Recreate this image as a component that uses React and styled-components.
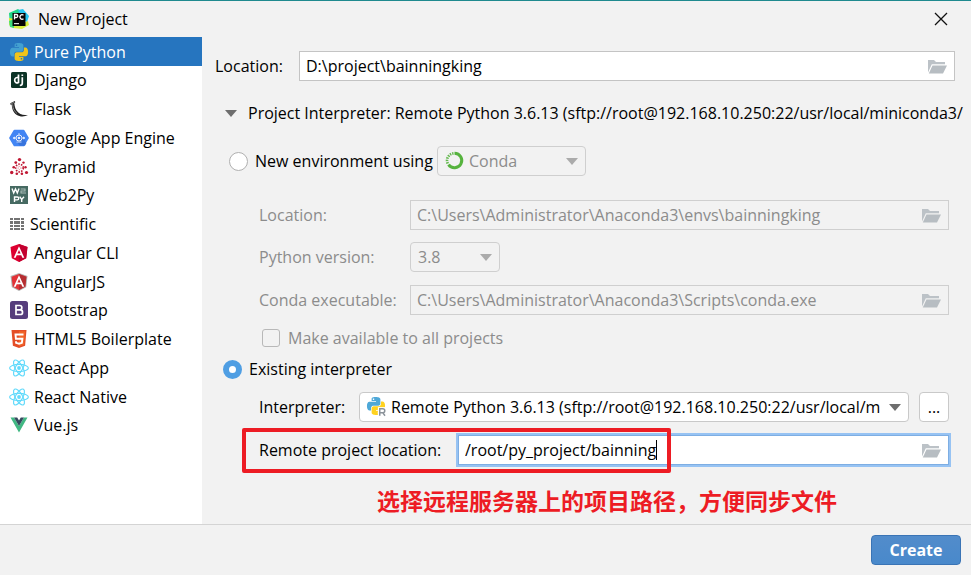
import React from 'react';
import styled, { createGlobalStyle, css } from 'styled-components';

const GlobalStyle = createGlobalStyle`
  *, *::before, *::after { box-sizing: border-box; }
  html, body { margin: 0; height: 100%; }
  #root { min-height: 100%; }
  body, button, input, select {
    font-family: "Open Sans", "Noto Sans", "Noto Sans CJK SC", sans-serif;
    font-size: 16px;
    line-height: 20px;
    color: #000;
  }
`;

const Dialog = styled.div`
  display: flex;
  flex-direction: column;
  min-height: 100vh;
  background: #f2f2f2;
  border-top: 1px solid #1f8a8f;
`;

const TitleBar = styled.header`
  display: flex;
  align-items: center;
  height: 36px;
  padding: 0 23px 0 9px;
  gap: 9px;
`;

const Title = styled.h1`
  flex: 1;
  margin: 0;
  font-size: 16px;
  font-weight: 400;
`;

const CloseButton = styled.button`
  display: flex;
  padding: 0;
  border: 0;
  background: none;
`;

const Body = styled.div`
  flex: 1;
  display: flex;
`;

const Sidebar = styled.nav`
  flex: none;
  width: 202px;
  background: #fff;
`;

const TypeList = styled.ul`
  display: grid;
  grid-auto-rows: 29px 28px 29px 29px;
  margin: 0;
  padding: 0;
  list-style: none;
`;

const TypeButton = styled.button`
  display: flex;
  align-items: center;
  gap: 6px;
  width: 100%;
  height: 100%;
  padding: 0 0 0 10px;
  border: 0;
  text-align: left;
  background: ${(p) => (p.$active ? '#2675bf' : 'transparent')};
  color: ${(p) => (p.$active ? '#fff' : '#000')};
`;

const Icon = styled.svg`
  flex: none;
  display: block;
  overflow: visible;
`;

const Form = styled.form`
  flex: 1;
  min-width: 0;
  display: flex;
  flex-direction: column;
  padding: 14px 16px 4px 13px;
`;

const Row = styled.div`
  display: flex;
  align-items: center;
  position: relative;
  height: 30px;
  margin-top: ${(p) => p.$top || 0}px;
  padding-left: ${(p) => p.$indent || 0}px;
  padding-right: ${(p) => p.$end || 0}px;
`;

const Label = styled.label`
  flex: none;
  width: ${(p) => (p.$width ? `${p.$width}px` : 'auto')};
  white-space: nowrap;
  color: ${(p) => (p.$muted ? '#8c8c8c' : '#000')};
`;

const Disclosure = styled.button`
  display: flex;
  align-items: center;
  gap: 11px;
  padding: 0;
  border: 0;
  background: none;
  text-align: left;
  white-space: nowrap;
`;

const FieldBox = styled.div`
  flex: 1;
  min-width: 0;
  display: flex;
  align-items: center;
  position: relative;
  height: 30px;
  padding-right: 7px;
  border: 1px solid ${(p) => (p.$disabled ? '#cfcfcf' : '#c4c4c4')};
  background: ${(p) => (p.$disabled ? 'transparent' : '#fff')};
  ${(p) =>
    p.$focused &&
    css`
      border-color: #7eaee3;
      box-shadow: 0 0 0 2px #97c3f3;
    `}
`;

const TextInput = styled.input`
  flex: 1;
  min-width: 0;
  padding: 0 6px;
  border: 0;
  outline: 0;
  background: none;
  &:disabled { color: #8c8c8c; }
`;

const BrowseButton = styled.button`
  display: flex;
  padding: 0;
  border: 0;
  background: none;
`;

const Caret = styled.span`
  position: absolute;
  left: 197px;
  top: 4px;
  width: 1px;
  height: 20px;
  background: #000;
`;

const SelectBox = styled.div`
  position: relative;
  flex: ${(p) => (p.$width ? 'none' : '1')};
  width: ${(p) => (p.$width ? `${p.$width}px` : 'auto')};
  min-width: 0;
  height: 30px;
`;

const Select = styled.select`
  appearance: none;
  width: 100%;
  height: 100%;
  padding: 0 28px 0 ${(p) => (p.$icon ? 31 : 7)}px;
  border: 1px solid #c9c9c9;
  border-radius: 4px;
  background: #fff;
  opacity: 1;
  &:disabled { background: transparent; color: #8c8c8c; border-color: #cfcfcf; }
`;

const SelectIcon = styled.span`
  position: absolute;
  left: 8px;
  top: 5px;
  pointer-events: none;
`;

const SelectArrow = styled.span`
  position: absolute;
  right: 8px;
  top: 12px;
  pointer-events: none;
`;

const Radio = styled.input`
  appearance: none;
  flex: none;
  width: 19px;
  height: 19px;
  margin: 0 7px 0 0;
  border: 1px solid #b0b0b0;
  border-radius: 50%;
  background: #fff;
  &:checked { border: 6px solid #4f9ee3; }
`;

const Checkbox = styled.input`
  appearance: none;
  flex: none;
  width: 18px;
  height: 18px;
  margin: 0 8px 0 0;
  border: 1px solid #b8b8b8;
  border-radius: 3px;
`;

const MoreButton = styled.button`
  flex: none;
  width: 30px;
  height: 30px;
  margin-left: 10px;
  padding: 0;
  border: 1px solid #c9c9c9;
  border-radius: 4px;
  background: #fff;
`;

const Highlight = styled.span`
  position: absolute;
  left: 27px;
  top: -7px;
  width: 429px;
  height: 45px;
  border: 4px solid #ed1c24;
  border-radius: 2px;
  pointer-events: none;
`;

const Note = styled.p`
  margin: 19px 0 0 162px;
  font-family: "Noto Sans CJK SC", sans-serif;
  font-size: 23px;
  line-height: 32px;
  font-weight: 700;
  color: #ed1c24;
  white-space: nowrap;
`;

const Footer = styled.footer`
  display: flex;
  justify-content: flex-end;
  align-items: center;
  height: 51px;
  padding: 0 10px;
  border-top: 1px solid #d4d4d4;
`;

const CreateButton = styled.button`
  width: 90px;
  height: 30px;
  padding: 0;
  border: 1px solid #3a74b5;
  border-radius: 4px;
  background: linear-gradient(#528ccb, #4989cb);
  color: #fff;
  font-weight: 700;
`;

const PY =
  'M14.25.18l.9.2.73.26.59.3.45.32.34.34.25.34.16.33.1.3.04.26.02.2-.01.13V8.5l-.05.63-.13.55-.21.46-.26.38-.3.31-.33.25-.35.19-.35.14-.33.1-.3.07-.26.04-.21.02H8.77l-.69.05-.59.14-.5.22-.41.27-.33.32-.27.35-.2.36-.15.37-.1.35-.07.32-.04.27-.02.21v3.06H3.17l-.21-.03-.28-.07-.32-.12-.35-.18-.36-.26-.36-.36-.35-.46-.32-.59-.28-.73-.21-.88-.14-1.05-.05-1.23.06-1.22.16-1.04.24-.87.32-.71.36-.57.4-.44.42-.33.42-.24.4-.16.36-.1.32-.05.24-.01h.16l.06.01h8.16v-.83H6.18l-.01-2.75-.02-.37.05-.34.11-.31.17-.28.25-.26.31-.23.38-.2.44-.18.51-.15.58-.12.64-.1.71-.06.77-.04.84-.02 1.27.05zm-6.3 1.98l-.23.33-.08.41.08.41.23.34.33.22.41.09.41-.09.33-.22.23-.34.08-.41-.08-.41-.23-.33-.33-.22-.41-.09-.41.09z';

const PythonIcon = ({ remote }) => (
  <Icon width="18" height="18" viewBox="0 0 24 24" aria-hidden="true">
    <path d={PY} fill={remote ? '#4ea8d8' : '#43a0d0'} />
    <path d={PY} fill={remote ? '#ffd21f' : '#f0c419'} transform="rotate(180 12 12)" />
    {remote && (
      <g>
        <path d="M14.500 13.500H26v13H14.500z" fill="#fff" />
        <path d="M17 25v-9.500h4a2.700 2.700 0 0 1 0 5.400h-4m4 0l3 4.100" fill="none" stroke="#8a9299" strokeWidth="2" />
      </g>
    )}
  </Icon>
);

const PyCharmIcon = () => (
  <Icon width="20" height="20" viewBox="0 0 20 20" aria-hidden="true">
    <path d="M0 4L9 0l4 3-6 12-6 2z" fill="#21d789" />
    <path d="M9 1l5-1 6 7-2 6-5-3z" fill="#25c5ef" />
    <path d="M0 9l6 1 7 5 6-3 1 4-7 4-9-1-4-3z" fill="#d8ee3c" />
    <path d="M0 12l5-2v9l-4-1z" fill="#3ddc7c" />
    <path d="M3.500 4h13v13h-13z" fill="#050505" />
    <path d="M5.500 10.500v-5h1.800a1.500 1.500 0 0 1 0 3H5.500M14.500 6.300a2.200 2.200 0 1 0 0 3.400" fill="none" stroke="#fff" strokeWidth="1.300" />
    <path d="M5 14h5v1.200H5z" fill="#ddd" />
  </Icon>
);

const DjangoIcon = () => (
  <Icon width="18" height="18" viewBox="0 0 18 18" aria-hidden="true">
    <rect x="1" y="1" width="16" height="16" rx="1.500" fill="#0c3326" />
    <path d="M8.500 3.500V12M8.500 6.800C6.500 6 4.700 7 4.700 9.200S6.400 12.200 8.500 11.700M12.300 6.200v6c0 1.500-.8 2.100-2.500 2.300M12.300 3.400v1.700" fill="none" stroke="#fff" strokeWidth="1.700" />
  </Icon>
);

const FlaskIcon = () => (
  <Icon width="18" height="18" viewBox="0 0 18 18" aria-hidden="true">
    <path d="M.3 3.200L4.800 1l.5 1.300-1 .7c.2 3.500 1.200 7 4 9.600 2.700 2.300 5.500 2.700 9.700 2.700-3.500 1.500-8 1.800-11.500-.6C2.700 12 2 8 1.700 4.500L.5 4.700z" fill="#222" />
    <path d="M2.600 4.300c.3 4.200 1.500 7 4.500 9.200M1.200 3.700l3-1.300" fill="none" stroke="#aaa" strokeWidth=".7" />
  </Icon>
);

const GoogleIcon = () => (
  <Icon width="18" height="18" viewBox="0 0 18 18" aria-hidden="true">
    <path d="M4.500.8h9a1 1 0 0 1 .9.500l4.300 7.200a1 1 0 0 1 0 1l-4.300 7.200a1 1 0 0 1-.9.500h-9a1 1 0 0 1-.9-.5L-.7 9.500a1 1 0 0 1 0-1l4.300-7.200a1 1 0 0 1 .9-.5z" fill="#4285f4" />
    <path d="M12 6l4.400 8.300-1.500 2.400h-5L6 12z" fill="#3874dd" />
    <circle cx="9" cy="9" r="3" fill="none" stroke="#e8f0ff" />
    <circle cx="9" cy="9" r="1.300" fill="#e8f0ff" />
    <path d="M9 4v2M3 9l2-1v2zm12 0l-2-1v2zM6.500 13h5" fill="#e8f0ff" stroke="#e8f0ff" strokeWidth=".8" />
  </Icon>
);

const PyramidIcon = () => (
  <Icon width="18" height="18" viewBox="0 0 18 18" aria-hidden="true">
    <g fill="#c01733">
      {[[9.500, 1.600, 1.700], [5.800, 4.600, 1.400], [13.500, 4.600, 1.200], [3.700, 9.200, 1.300], [15.500, 9.200, 1.200], [1.700, 14.500, 1.700], [16.500, 14.500, 1.600], [6.800, 15.800, 1.300], [11.900, 15.800, 1.300]].map(([x, y, r]) => (
        <circle key={`${x}-${y}`} cx={x} cy={y} r={r} />
      ))}
    </g>
    <circle cx="9.500" cy="10" r="3.800" fill="none" stroke="#c01733" strokeWidth="1.700" strokeDasharray="1.500 1.200" />
    <circle cx="9.500" cy="10" r="1.500" fill="none" stroke="#df7c8b" strokeDasharray="1 .8" />
  </Icon>
);

const Web2PyIcon = () => (
  <Icon width="18" height="18" viewBox="0 0 18 18" aria-hidden="true">
    <path d="M0 0h18v18H0z" fill="#466a62" />
    <path d="M2 2.500l1.700 4.500 1.800-4 1.800 4L9 2.500M4.500 16v-5h2.800a1.300 1.300 0 0 1 0 2.900H4.500M9.700 10.700l2 2.700 2.300-2.700M11.700 13.400V16" fill="none" stroke="#fff" strokeWidth="1.400" />
    <path d="M10.700 3h4.300v2h-4v2h5" fill="none" stroke="#a9bcb7" strokeWidth="1.100" />
  </Icon>
);

const ScientificIcon = () => (
  <Icon width="14" height="14" viewBox="0 0 14 14" aria-hidden="true">
    <path d="M0 1h3v2H0zM4 1h6v2H4zM11 1h3v2h-3zM0 4h3v3H0zM4 4h6v3H4zM11 4h3v3h-3zM0 8h3v2H0zM4 8h6v2H4zM11 8h3v2h-3zM0 11h3v2H0zM4 11h6v2H4zM11 11h3v2h-3z" fill="#737373" />
  </Icon>
);

const AngularIcon = ({ legacy }) => (
  <Icon width="18" height="18" viewBox="0 0 18 18" aria-hidden="true">
    <path d="M9 0l8.500 3-1.300 11.200L9 18l-7.200-3.800L.5 3z" fill={legacy ? '#b3b3b3' : '#dd0031'} />
    {legacy && <path d="M9 1l7.400 2.700-1.100 9.800L9 16.900l-6.300-3.400L1.600 3.700z" fill="#e23237" />}
    <path d={legacy ? 'M9 1l7.400 2.700-1.100 9.800L9 16.900z' : 'M9 0l8.500 3-1.300 11.200L9 18z'} fill={legacy ? '#b52e31' : '#c3002f'} />
    <path d="M9 2.200L3.700 13.800h2l1-2.600h4.600l1 2.600h2zm0 3.900l1.600 3.500H7.400z" fill="#fff" />
  </Icon>
);

const BootstrapIcon = () => (
  <Icon width="18" height="18" viewBox="0 0 18 18" aria-hidden="true">
    <rect width="18" height="18" rx="2.500" fill="#563d7c" />
    <path d="M6 4.500h3.700a2.100 2.100 0 0 1 0 4.300H6zm0 4.300h4.200a2.300 2.300 0 0 1 0 4.700H6z" fill="none" stroke="#fff" strokeWidth="1.700" />
  </Icon>
);

const Html5Icon = () => (
  <Icon width="18" height="18" viewBox="0 0 18 18" aria-hidden="true">
    <path d="M1.500 0h15l-1.400 15.800L9 18l-6.100-2.200z" fill="#e44d26" />
    <path d="M9 1.300h6.200l-1.200 13.500-5 1.800z" fill="#f16529" />
    <path d="M13.500 4.500h-8l.4 4.300h6.500l-.5 4L9 13.700l-2.900-.9-.1-1.500" fill="none" stroke="#fff" strokeWidth="1.900" />
  </Icon>
);

const ReactIcon = () => (
  <Icon width="18" height="18" viewBox="0 0 18 18" aria-hidden="true">
    <g fill="none" stroke="#61dafb" strokeWidth="1.200">
      <ellipse cx="9" cy="9" rx="9.400" ry="3.600" />
      <ellipse cx="9" cy="9" rx="9" ry="3.600" transform="rotate(60 9 9)" />
      <ellipse cx="9" cy="9" rx="9" ry="3.600" transform="rotate(120 9 9)" />
    </g>
    <circle cx="9" cy="9" r="1.900" fill="#61dafb" />
  </Icon>
);

const VueIcon = () => (
  <Icon width="18" height="18" viewBox="0 0 18 18" aria-hidden="true">
    <path d="M.5 1.500H4l5 8.500 5-8.500h3.500L9 16.500z" fill="#41b883" />
    <path d="M4 1.500h3.200L9 4.500l1.800-3H14L9 10z" fill="#35495e" />
  </Icon>
);

const FolderIcon = () => (
  <Icon width="19" height="15" viewBox="0 0 19 15" aria-hidden="true">
    <path d="M0 13.500V1h6l2 2h9v2.300H3.800z" fill="#bcc2c7" />
    <path d="M4.500 6.500H19L15 14.500H.8z" fill="#b7bdc2" />
  </Icon>
);

const CondaIcon = () => (
  <Icon width="19" height="19" viewBox="0 0 19 19" aria-hidden="true">
    <path d="M9.500 2.200A7.300 7.300 0 1 1 3.500 13.700" fill="none" stroke="#56b33e" strokeWidth="3" />
    <path d="M8.500 2.300A7.300 7.300 0 0 0 3 13" fill="none" stroke="#62b84c" strokeWidth="2.800" strokeDasharray="1.400 1" />
    <path d="M7.500 4.500A5.300 5.300 0 0 0 4.500 12" fill="none" stroke="#f2f2f2" strokeWidth=".8" strokeDasharray="1 1" />
  </Icon>
);

const Triangle = ({ muted }) => (
  <Icon width="12" height="7" viewBox="0 0 12 7" aria-hidden="true">
    <path d="M0 0h12L6 7z" fill={muted ? '#ababab' : '#6e6e6e'} />
  </Icon>
);

const TYPES = [
  ['Pure Python', PythonIcon],
  ['Django', DjangoIcon],
  ['Flask', FlaskIcon],
  ['Google App Engine', GoogleIcon],
  ['Pyramid', PyramidIcon],
  ['Web2Py', Web2PyIcon],
  ['Scientific', ScientificIcon],
  ['Angular CLI', AngularIcon],
  ['AngularJS', () => <AngularIcon legacy />],
  ['Bootstrap', BootstrapIcon],
  ['HTML5 Boilerplate', Html5Icon],
  ['React App', ReactIcon],
  ['React Native', ReactIcon],
  ['Vue.js', VueIcon],
];

function PathField({ id, value, disabled, focused }) {
  return (
    <FieldBox $disabled={disabled} $focused={focused}>
      <TextInput id={id} defaultValue={value} disabled={disabled} spellCheck={false} />
      {focused && <Caret />}
      <BrowseButton type="button" aria-label="Browse" disabled={disabled}>
        <FolderIcon />
      </BrowseButton>
    </FieldBox>
  );
}

function Dropdown({ id, label, value, disabled, icon, width }) {
  return (
    <SelectBox $width={width}>
      <Select id={id} aria-label={label} disabled={disabled} $icon={Boolean(icon)}>
        <option>{value}</option>
      </Select>
      {icon && <SelectIcon>{icon}</SelectIcon>}
      <SelectArrow>
        <Triangle muted={disabled} />
      </SelectArrow>
    </SelectBox>
  );
}

export default function App() {
  return (
    <>
      <GlobalStyle />
      <Dialog role="dialog" aria-label="New Project">
        <TitleBar>
          <PyCharmIcon />
          <Title>New Project</Title>
          <CloseButton type="button" aria-label="Close">
            <Icon width="14" height="14" viewBox="0 0 14 14" aria-hidden="true">
              <path d="M1 1l12 12M13 1L1 13" stroke="#111" strokeWidth="1.300" />
            </Icon>
          </CloseButton>
        </TitleBar>
        <Body>
          <Sidebar aria-label="Project type">
            <TypeList>
              {TYPES.map(([name, TypeIcon], i) => (
                <li key={name}>
                  <TypeButton type="button" $active={i === 0}>
                    <TypeIcon />
                    {name}
                  </TypeButton>
                </li>
              ))}
            </TypeList>
          </Sidebar>
          <Form onSubmit={(e) => e.preventDefault()}>
            <Row>
              <Label htmlFor="location" $width={84}>Location:</Label>
              <PathField id="location" value="D:\project\bainningking" />
            </Row>
            <Row $top={17} $indent={10}>
              <Disclosure type="button" aria-expanded="true">
                <Triangle />
                Project Interpreter: Remote Python 3.6.13 (sftp://root@192.168.10.250:22/usr/local/miniconda3/
              </Disclosure>
            </Row>
            <Row $top={18} $indent={14}>
              <Radio type="radio" name="env" id="new-env" />
              <Label htmlFor="new-env" $width={182}>New environment using</Label>
              <Dropdown id="env-tool" label="Environment tool" value="Conda" icon={<CondaIcon />} width={149} disabled />
            </Row>
            <Row $top={24} $indent={44} $end={6}>
              <Label htmlFor="env-location" $width={151} $muted>Location:</Label>
              <PathField id="env-location" value="C:\Users\Administrator\Anaconda3\envs\bainningking" disabled />
            </Row>
            <Row $top={12} $indent={44}>
              <Label htmlFor="version" $width={151} $muted>Python version:</Label>
              <Dropdown id="version" value="3.8" width={90} disabled />
            </Row>
            <Row $top={13} $indent={44} $end={6}>
              <Label htmlFor="conda" $width={151} $muted>Conda executable:</Label>
              <PathField id="conda" value="C:\Users\Administrator\Anaconda3\Scripts\conda.exe" disabled />
            </Row>
            <Row $top={8} $indent={47}>
              <Checkbox type="checkbox" id="all-projects" disabled />
              <Label htmlFor="all-projects" $muted>Make available to all projects</Label>
            </Row>
            <Row $top={1} $indent={8}>
              <Radio type="radio" name="env" id="existing" defaultChecked />
              <Label htmlFor="existing">Existing interpreter</Label>
            </Row>
            <Row $top={8} $indent={44} $end={6}>
              <Label htmlFor="interpreter" $width={100}>Interpreter:</Label>
              <Dropdown
                id="interpreter"
                value="Remote Python 3.6.13 (sftp://root@192.168.10.250:22/usr/local/miniconda3/envs/py36/bin/python)"
                icon={<PythonIcon remote />}
              />
              <MoreButton type="button" aria-label="More interpreters">...</MoreButton>
            </Row>
            <Row $top={13} $indent={44} $end={6}>
              <Label htmlFor="remote" $width={199}>Remote project location:</Label>
              <PathField id="remote" value="/root/py_project/bainning" focused />
              <Highlight />
            </Row>
            <Note>选择远程服务器上的项目路径，方便同步文件</Note>
          </Form>
        </Body>
        <Footer>
          <CreateButton type="button">Create</CreateButton>
        </Footer>
      </Dialog>
    </>
  );
}
